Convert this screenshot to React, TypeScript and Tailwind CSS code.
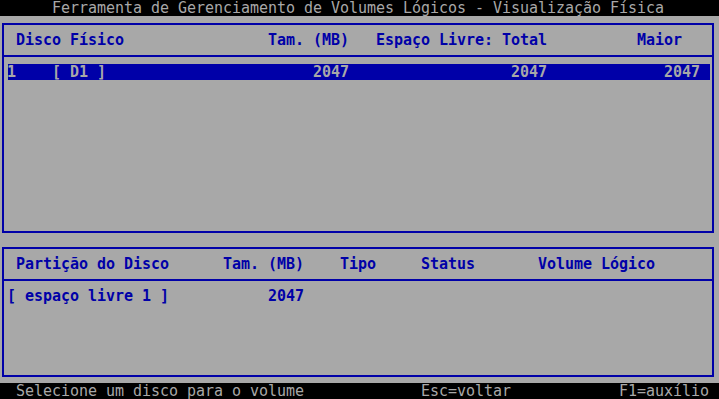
const mono = "font-['DejaVu_Sans_Mono','Liberation_Mono',monospace] text-[15px] leading-[16px] tracking-[-0.03px] whitespace-pre";

export default function App() {
  return (
    <div className={`w-[719px] h-[399px] overflow-hidden bg-[#a8a8a8] flex flex-col ${mono}`}>
      {/* title */}
      <div className="h-[16px] bg-black text-[#a8a8a8] pl-[52px]">
        Ferramenta de Gerenciamento de Volumes Lógicos - Visualização Física
      </div>

      {/* physical disks */}
      <div className="mt-[7px] ml-[2px] w-[712px] h-[210px] border-2 border-[#0000a8] flex flex-col">
        <div className="h-[32px] pt-[7px] pl-[12px] border-b-2 border-[#0000a8] text-[#0000a8] font-bold">
          {"Disco Físico                Tam. (MB)   Espaço Livre: Total          Maior"}
        </div>
        <div className="mt-[7px] ml-[4px] mr-[2px] h-[16px] bg-[#0000a8] pl-0 -indent-[1px] text-[#a8a8a8] font-bold">
          {"1    [ D1 ]                       2047                  2047             2047"}
        </div>
      </div>

      {/* partitions */}
      <div className="mt-[14px] ml-[2px] w-[712px] h-[130px] border-2 border-[#0000a8] flex flex-col">
        <div className="h-[32px] pt-[7px] pl-[12px] border-b-2 border-[#0000a8] text-[#0000a8] font-bold">
          {"Partição do Disco      Tam. (MB)    Tipo     Status       Volume Lógico"}
        </div>
        <div className="mt-[7px] pl-[3px] text-[#0000a8] font-bold">
          {"[ espaço livre 1 ]           2047"}
        </div>
      </div>

      {/* status bar */}
      <div className="mt-[6px] h-[16px] bg-black text-[#a8a8a8] pl-[16px]">
        {"Selecione um disco para o volume             Esc=voltar            F1=auxílio"}
      </div>
    </div>
  );
}
